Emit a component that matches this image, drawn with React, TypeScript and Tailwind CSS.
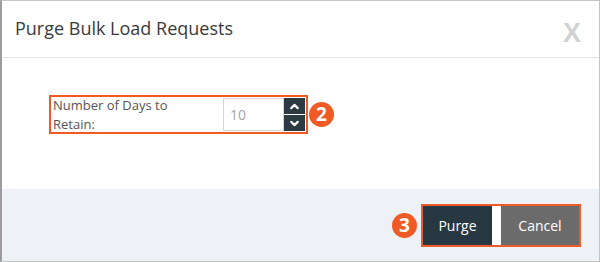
import { ChevronUp, ChevronDown } from 'lucide-react';

function Badge({ n }: { n: number }) {
  return (
    <div className="w-[25px] h-[25px] rounded-full bg-[#f05a24] text-white flex items-center justify-center text-[19px] font-bold leading-none">
      {n}
    </div>
  );
}

export default function App() {
  return (
    <div
      className="w-[600px] h-[262px] flex flex-col bg-white border border-[#c4c4c4] border-l-2 border-l-[#9c9c9c]"
      style={{ fontFamily: '"Open Sans", "Noto Sans", sans-serif' }}
    >
      {/* Header */}
      <div className="h-[57px] flex items-center justify-between pl-[13px] pr-[18px] border-b border-[#e3e3e3]">
        <h2 className="text-[18px] text-[#3a3a3a] pb-[2px]">Purge Bulk Load Requests</h2>
        <span
          className="text-[27px] font-bold text-[#d2d2d2] leading-none pt-[9px]"
          style={{ fontFamily: '"Liberation Sans", sans-serif' }}
        >
          X
        </span>
      </div>

      {/* Body */}
      <div className="h-[131px] pl-[47px] pt-[37px]">
        <div className="flex items-center gap-[1px]">
          <div className="flex items-center border-2 border-[#f05a24] h-[39px] pl-[2px] pr-[1px]">
            <div className="w-[170px] text-[13px] leading-[19px] text-[#555] pt-[1px]">
              Number of Days to
              <br />
              Retain:
            </div>
            <div className="w-[61px] h-[33px] border border-[#d5d5d5] flex items-center pl-[6px] text-[14px] text-[#a5a5a5]">
              10
            </div>
            <div className="w-[21px] h-[33px] flex flex-col">
              <div className="h-[16px] bg-[#2b3a43] flex items-center justify-center">
                <ChevronUp className="w-[13px] h-[13px] text-white" strokeWidth={4} />
              </div>
              <div className="h-[1px] bg-white" />
              <div className="h-[16px] bg-[#2b3a43] flex items-center justify-center">
                <ChevronDown className="w-[13px] h-[13px] text-white" strokeWidth={4} />
              </div>
            </div>
          </div>
          <Badge n={2} />
        </div>
      </div>

      {/* Footer */}
      <div className="flex-1 bg-[#eef1f6] flex justify-end items-start pt-[15px] pr-[18px]">
        <div className="flex items-center gap-[4px]">
          <Badge n={3} />
          <div className="flex border-2 border-[#f05a24] h-[43px] bg-white">
            <button className="w-[69px] h-full bg-[#283842] text-white text-[14px]">Purge</button>
            <div className="w-[9px]" />
            <button className="w-[78px] h-full bg-[#6b6b6b] text-white text-[14px]">Cancel</button>
          </div>
        </div>
      </div>
    </div>
  );
}
